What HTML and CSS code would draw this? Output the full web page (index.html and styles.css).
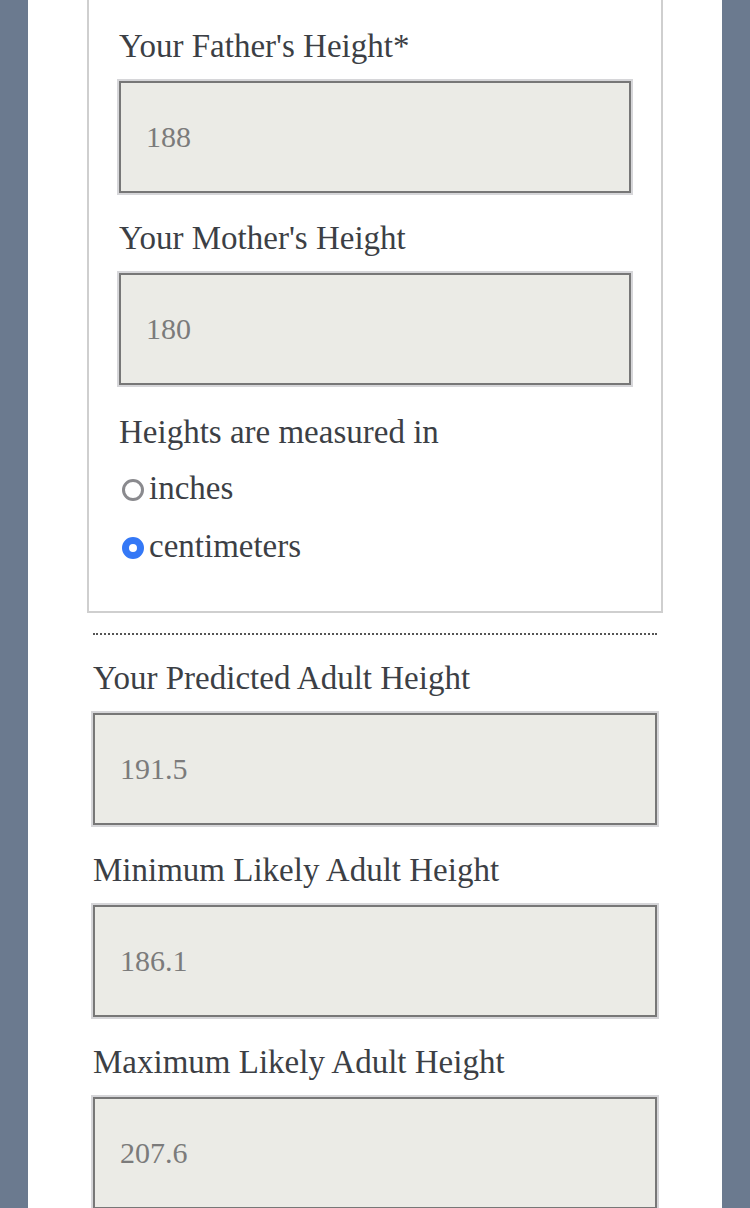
FILE: index.html
```html
<!DOCTYPE html>
<html lang="en">
<head>
<meta charset="utf-8">
<title>Height Predictor</title>
<link rel="stylesheet" href="styles.css">
</head>
<body>
<main class="page">
  <fieldset class="inputs">
    <div class="field">
      <label class="label" for="father">Your Father's Height*</label>
      <input class="box" id="father" type="text" value="188" readonly>
    </div>
    <div class="field">
      <label class="label" for="mother">Your Mother's Height</label>
      <input class="box" id="mother" type="text" value="180" readonly>
    </div>
    <div class="units">
      <div class="label units-title">Heights are measured in</div>
      <label class="option"><input class="radio" type="radio" name="unit" value="in">inches</label>
      <label class="option"><input class="radio" type="radio" name="unit" value="cm" checked>centimeters</label>
    </div>
  </fieldset>
  <div class="divider"></div>
  <section class="results">
    <div class="field">
      <label class="label" for="pred">Your Predicted Adult Height</label>
      <input class="box" id="pred" type="text" value="191.5" readonly>
    </div>
    <div class="field">
      <label class="label" for="min">Minimum Likely Adult Height</label>
      <input class="box" id="min" type="text" value="186.1" readonly>
    </div>
    <div class="field">
      <label class="label" for="max">Maximum Likely Adult Height</label>
      <input class="box" id="max" type="text" value="207.6" readonly>
    </div>
  </section>
</main>
</body>
</html>
```
FILE: styles.css
```css
html, body {
  margin: 0;
  padding: 0;
}
body {
  background: #6b7a8f;
  font-family: "Liberation Serif", "Times New Roman", serif;
  color: #3c3f45;
}
.page {
  margin: 0 28px;
  background: #ffffff;
  min-height: 1208px;
  padding: 0 65px;
  box-sizing: border-box;
  overflow: hidden;
}
.inputs {
  margin: 0 -6px;
  border: 2px solid #cfcfcf;
  border-top: none;
  padding: 25px 30px 36px;
  min-width: 0;
}
.field {
  margin-bottom: 24px;
}
.label {
  display: block;
  font-size: 33px;
  line-height: 40px;
  padding-top: 1px;
  margin-bottom: 15px;
  color: #3c3f45;
}
.box {
  display: block;
  width: 100%;
  height: 112px;
  box-sizing: border-box;
  margin: 0;
  border: 2px solid #777777;
  box-shadow: 0 0 0 2px #d6d6d9;
  border-radius: 0;
  background: #ebebe6;
  padding: 0 25px;
  font-family: "Liberation Serif", "Times New Roman", serif;
  font-size: 30px;
  color: #7b7b7b;
  outline: none;
}
.units {
  padding-top: 2px;
}
.units-title {
  margin-bottom: 7px;
}
.option {
  display: block;
  font-size: 33px;
  line-height: 58px;
  color: #3c3f45;
}
.radio {
  appearance: none;
  -webkit-appearance: none;
  width: 22px;
  height: 22px;
  margin: 0 5px 0 3px;
  border: 3px solid #8a8a8e;
  border-radius: 50%;
  background: #ffffff;
  box-sizing: border-box;
  vertical-align: middle;
  position: relative;
  top: -1px;
}
.radio:checked {
  border: 7px solid #3478f6;
}
.divider {
  margin-top: 20px;
  border-top: 2px dotted #555555;
}
.results {
  padding-top: 22px;
}
```
